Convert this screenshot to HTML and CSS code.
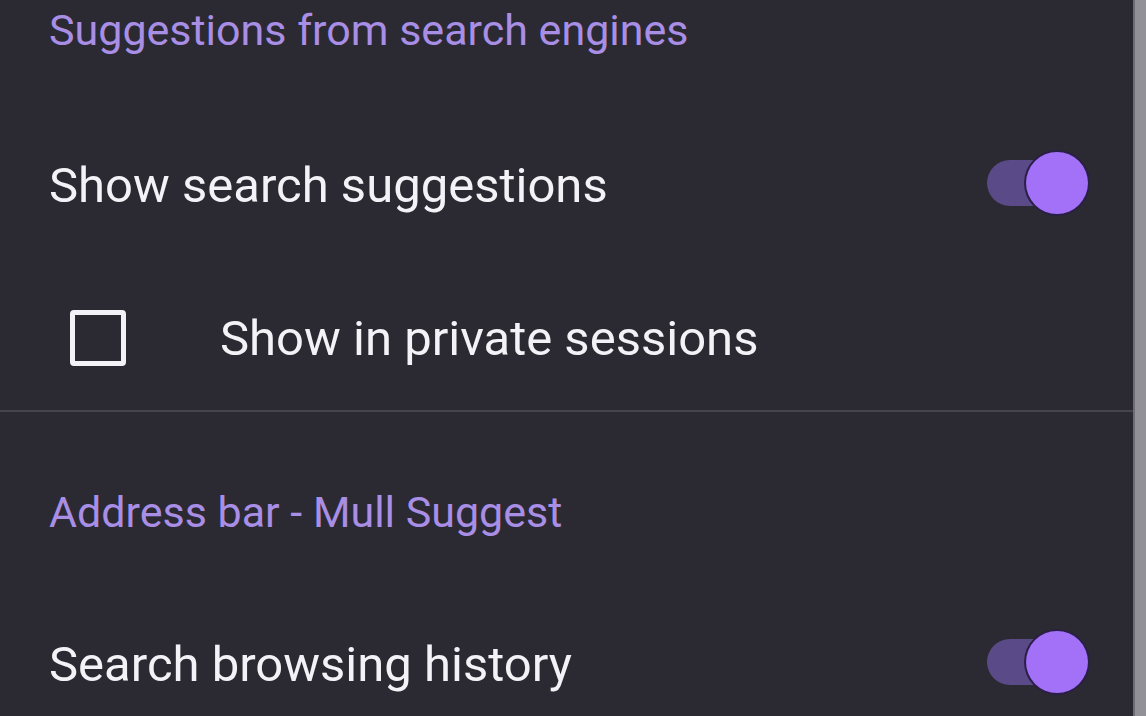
FILE: index.html
```html
<!DOCTYPE html>
<html>
<head>
<meta charset="utf-8">
<link rel="stylesheet" href="styles.css">
</head>
<body>
<div class="screen">
  <main class="content">
    <div class="category first"><span>Suggestions from search engines</span></div>
    <div class="switch-row row1">
      <span class="label">Show search suggestions</span>
      <span class="switch"><span class="track"></span><span class="thumb"></span></span>
    </div>
    <div class="check-row">
      <span class="checkbox"></span>
      <span class="label">Show in private sessions</span>
    </div>
    <div class="divider"></div>
    <div class="category second"><span>Address bar - Mull Suggest</span></div>
    <div class="switch-row row2">
      <span class="label">Search browsing history</span>
      <span class="switch"><span class="track"></span><span class="thumb"></span></span>
    </div>
  </main>
  <div class="scrollbar"></div>
</div>
</body>
</html>
```
FILE: styles.css
```css
html, body {
  margin: 0;
  padding: 0;
  background: #2b2a32;
  overflow: hidden;
}
.screen {
  display: flex;
  width: 1146px;
  height: 716px;
  overflow: hidden;
  font-family: Roboto, "Noto Sans", sans-serif;
}
.content {
  flex: 1;
  display: flex;
  flex-direction: column;
  min-width: 0;
}
.content > * {
  flex-shrink: 0;
}
.scrollbar {
  width: 13px;
  background: #929197;
  border-left: 2px solid #6e6d74;
  box-sizing: border-box;
}
.category {
  height: 60px;
  display: flex;
  align-items: center;
  padding-left: 49px;
  color: #a98ee6;
  font-size: 43px;
}
.category.second {
  margin-top: 70px;
}
.switch-row {
  height: 150px;
  display: flex;
  align-items: center;
  justify-content: space-between;
  padding-left: 49px;
  padding-right: 45px;
}
.row1 { margin-top: 50px; }
.row2 { margin-top: 47px; }
.label {
  color: #f3f2f6;
  font-size: 49px;
}
.switch {
  position: relative;
  width: 101px;
  height: 62px;
  display: block;
  margin-bottom: 5px;
}
.track {
  position: absolute;
  left: 0;
  top: 8px;
  width: 78px;
  height: 46px;
  border-radius: 23px;
  background: #5a4a88;
}
.thumb {
  position: absolute;
  right: 0;
  top: 0;
  width: 62px;
  height: 62px;
  border-radius: 50%;
  background: #a370f8;
  box-shadow: 0 0 0 2px #2a1f46;
}
.check-row {
  height: 144px;
  padding-top: 6px;
  display: flex;
  align-items: center;
  padding-left: 70px;
}
.checkbox {
  width: 56px;
  height: 56px;
  box-sizing: border-box;
  border: 5px solid #f3f2f6;
  border-radius: 4px;
  margin-right: 94px;
}
.divider {
  height: 2px;
  background: #46454d;
}
```
